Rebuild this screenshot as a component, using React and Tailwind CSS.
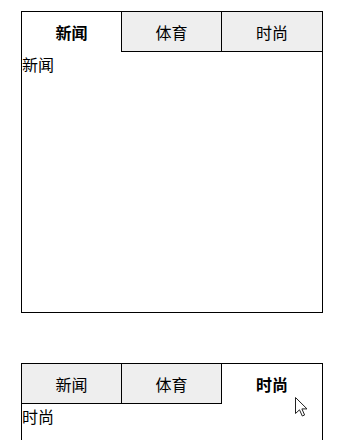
import React from "react";

const tabs = ["新闻", "体育", "时尚"];

function TabBox({ active, cursor }) {
  return (
    <div className="relative w-[302px] h-[302px] border border-black bg-white">
      <div className="flex">
        {tabs.map((t, i) => (
          <div
            key={t}
            className={
              "w-[100px] h-[40px] flex items-center justify-center text-[16px] text-black " +
              (i < 2 ? "border-r border-black " : "") +
              (i === active ? "bg-white font-bold" : "bg-[#eeeeee] border-b")
            }
          >
            {t}
          </div>
        ))}
      </div>
      <div className="text-[16px] leading-[24px] text-black">{tabs[active]}</div>
      {cursor && (
        <svg
          className="absolute left-[273px] top-[33px]"
          width="13"
          height="20"
          viewBox="0 0 13 20"
        >
          <path
            d="M0.5 0.5 L0.5 16.5 L4.5 12.8 L7.3 19 L9.6 18 L6.9 11.9 L12 11.9 Z"
            fill="white"
            stroke="#222"
            strokeWidth="1"
            strokeLinejoin="round"
          />
        </svg>
      )}
    </div>
  );
}

export default function App() {
  return (
    <div
      className="pt-[11px] pl-[21px] bg-white"
      style={{ fontFamily: '"Noto Sans CJK SC", "Noto Sans", sans-serif' }}
    >
      <TabBox active={0} />
      <div className="h-[50px]" />
      <TabBox active={2} cursor />
    </div>
  );
}
